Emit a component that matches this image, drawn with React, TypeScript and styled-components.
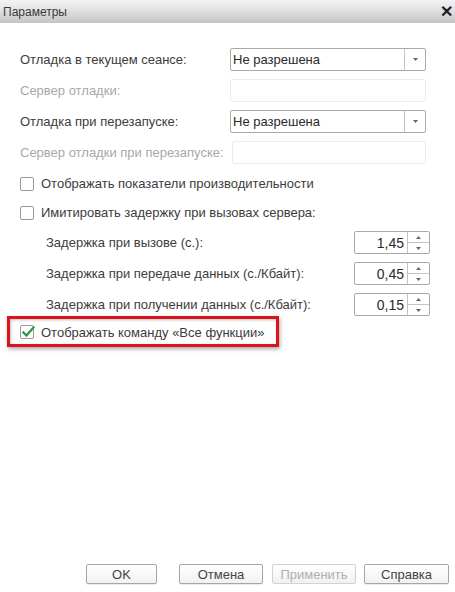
import React from "react";
import styled, { createGlobalStyle } from "styled-components";

const Global = createGlobalStyle`
  html, body { margin: 0; padding: 0; background: #fff; }
  body { font-family: "Liberation Sans", Arial, sans-serif; font-size: 13px; color: #3c3c3c; }
  #root { width: 455px; height: 592px; }
`;

const Window = styled.div`
  width: 455px;
  height: 592px;
  display: flex;
  flex-direction: column;
  background: #fff;
  overflow: hidden;
`;

const TitleBar = styled.div`
  height: 23px;
  flex: none;
  display: flex;
  align-items: center;
  justify-content: space-between;
  padding: 0 2px 0 3px;
  background: linear-gradient(#f2f2f2 0%, #e6e6e6 35%, #d4d4d4 70%, #c4c4c4 100%);
  font-size: 12px;
  color: #3a3a3a;
`;

const Close = styled.span`
  font-size: 16px;
  font-weight: bold;
  color: #222;
  width: 14px;
  display: flex;
  justify-content: center;
`;

const Body = styled.div`
  flex: 1;
  display: flex;
  flex-direction: column;
  padding: 25px 0 0 0;
`;

const FormRows = styled.div<{ $gap?: number; $mt?: number }>`
  display: flex;
  flex-direction: column;
  gap: ${(p) => p.$gap ?? 8}px;
  margin-top: ${(p) => p.$mt ?? 0}px;
  padding-left: 20px;
`;

const Row = styled.div<{ $indent?: number }>`
  height: 23px;
  display: flex;
  align-items: center;
  padding-left: ${(p) => p.$indent ?? 0}px;
`;

const Label = styled.span<{ $w?: number; $disabled?: boolean }>`
  width: ${(p) => (p.$w ? `${p.$w}px` : "auto")};
  flex: none;
  color: ${(p) => (p.$disabled ? "#a8a8a8" : "#3c3c3c")};
  white-space: nowrap;
`;

const Combo = styled.div`
  width: 196px;
  height: 23px;
  box-sizing: border-box;
  border: 1px solid #a9a9a9;
  border-radius: 2px;
  display: flex;
  align-items: stretch;
  background: #fff;
`;

const ComboText = styled.span`
  flex: 1;
  display: flex;
  align-items: center;
  padding-left: 2px;
  color: #2a2a2a;
`;

const ComboBtn = styled.span`
  width: 20px;
  border-left: 1px solid #c4c4c4;
  display: flex;
  align-items: center;
  justify-content: center;
`;

const Field = styled.div<{ $w: number }>`
  width: ${(p) => p.$w}px;
  height: 23px;
  box-sizing: border-box;
  border: 1px solid #ececec;
  border-radius: 2px;
  background: #fff;
`;

const CheckBox = styled.span`
  width: 14px;
  height: 14px;
  box-sizing: border-box;
  border: 1px solid #9a9a9a;
  border-radius: 2px;
  background: #fff;
  flex: none;
  margin-right: 7px;
  position: relative;
`;

const Spin = styled.div`
  width: 76px;
  height: 23px;
  box-sizing: border-box;
  border: 1px solid #a9a9a9;
  border-radius: 2px;
  display: flex;
  margin-left: auto;
  margin-right: 25px;
`;

const SpinValue = styled.span`
  flex: 1;
  display: flex;
  align-items: center;
  justify-content: flex-end;
  padding-right: 3px;
  font-size: 14px;
  color: #2a2a2a;
`;

const SpinBtns = styled.span`
  width: 21px;
  border-left: 1px solid #c4c4c4;
  display: flex;
  flex-direction: column;
`;

const SpinHalf = styled.span<{ $top?: boolean }>`
  flex: 1;
  display: flex;
  align-items: center;
  justify-content: center;
  border-bottom: ${(p) => (p.$top ? "1px solid #c4c4c4" : "none")};
`;

const Highlight = styled.div`
  margin: 0 0 0 7px;
  width: 272px;
  height: 31px;
  box-sizing: border-box;
  border: 3px solid #d9141c;
  box-shadow: 1px 2px 4px rgba(0, 0, 0, 0.35), inset 1px 1px 3px rgba(0, 0, 0, 0.25);
  display: flex;
  align-items: center;
  padding-left: 10px;
  padding-top: 1px;
`;

const Spacer = styled.div`
  flex: 1;
`;

const Buttons = styled.div`
  display: flex;
  align-items: center;
  padding: 0 6px 8px 86px;
`;

const Button = styled.button<{ $w: number; $ml: number; $disabled?: boolean }>`
  width: ${(p) => p.$w}px;
  margin-left: ${(p) => p.$ml}px;
  height: 20px;
  box-sizing: border-box;
  border: 1px solid ${(p) => (p.$disabled ? "#d2d2d2" : "#a6a6a6")};
  border-radius: 2px;
  background: linear-gradient(#ffffff, #f1f1f1);
  font-family: "Liberation Sans", Arial, sans-serif;
  font-size: 13px;
  font-weight: 400;
  color: ${(p) => (p.$disabled ? "#b0b0b0" : "#444")};
  padding: 0;
  box-shadow: ${(p) => (p.$disabled ? "none" : "0 1px 1px rgba(0,0,0,0.08)")};
`;

const Arrow = ({ up }: { up?: boolean }) => (
  <svg width="5" height="3" viewBox="0 0 5 3">
    <path d={up ? "M0 3 L2.5 0 L5 3 Z" : "M0 0 L5 0 L2.5 3 Z"} fill="#666" />
  </svg>
);

const Check = () => (
  <svg width="13" height="12" viewBox="0 0 13 12" style={{ position: "absolute", left: 1, top: 0 }}>
    <path d="M1.5 6.5 L4.5 9.5 L11.5 1.5" stroke="#2f9a4a" strokeWidth="2.4" fill="none" strokeLinecap="square" />
  </svg>
);

const ComboBox = ({ value }: { value: string }) => (
  <Combo>
    <ComboText>{value}</ComboText>
    <ComboBtn>
      <Arrow />
    </ComboBtn>
  </Combo>
);

const SpinBox = ({ value }: { value: string }) => (
  <Spin>
    <SpinValue>{value}</SpinValue>
    <SpinBtns>
      <SpinHalf $top>
        <Arrow up />
      </SpinHalf>
      <SpinHalf>
        <Arrow />
      </SpinHalf>
    </SpinBtns>
  </Spin>
);

export default function App() {
  return (
    <>
      <Global />
      <Window>
        <TitleBar>
          <span>Параметры</span>
          <Close>✕</Close>
        </TitleBar>
        <Body>
          <FormRows>
            <Row>
              <Label $w={210}>Отладка в текущем сеансе:</Label>
              <ComboBox value="Не разрешена" />
            </Row>
            <Row>
              <Label $w={210} $disabled>Сервер отладки:</Label>
              <Field $w={196} />
            </Row>
            <Row>
              <Label $w={210}>Отладка при перезапуске:</Label>
              <ComboBox value="Не разрешена" />
            </Row>
            <Row>
              <Label $w={212} $disabled>Сервер отладки при перезапуске:</Label>
              <Field $w={194} />
            </Row>
          </FormRows>
          <FormRows $mt={8} $gap={6}>
            <Row>
              <CheckBox />
              <Label>Отображать показатели производительности</Label>
            </Row>
            <Row>
              <CheckBox />
              <Label>Имитировать задержку при вызовах сервера:</Label>
            </Row>
          </FormRows>
          <FormRows $mt={7}>
            <Row $indent={26}>
              <Label>Задержка при вызове (с.):</Label>
              <SpinBox value="1,45" />
            </Row>
            <Row $indent={26}>
              <Label>Задержка при передаче данных (с./Кбайт):</Label>
              <SpinBox value="0,45" />
            </Row>
            <Row $indent={26}>
              <Label>Задержка при получении данных (с./Кбайт):</Label>
              <SpinBox value="0,15" />
            </Row>
          </FormRows>
          <Highlight>
            <CheckBox>
              <Check />
            </CheckBox>
            <Label>Отображать команду «Все функции»</Label>
          </Highlight>
          <Spacer />
          <Buttons>
            <Button $w={71} $ml={0}>OK</Button>
            <Button $w={84} $ml={22}>Отмена</Button>
            <Button $w={84} $ml={9} $disabled>Применить</Button>
            <Button $w={85} $ml={8}>Справка</Button>
          </Buttons>
        </Body>
      </Window>
    </>
  );
}
